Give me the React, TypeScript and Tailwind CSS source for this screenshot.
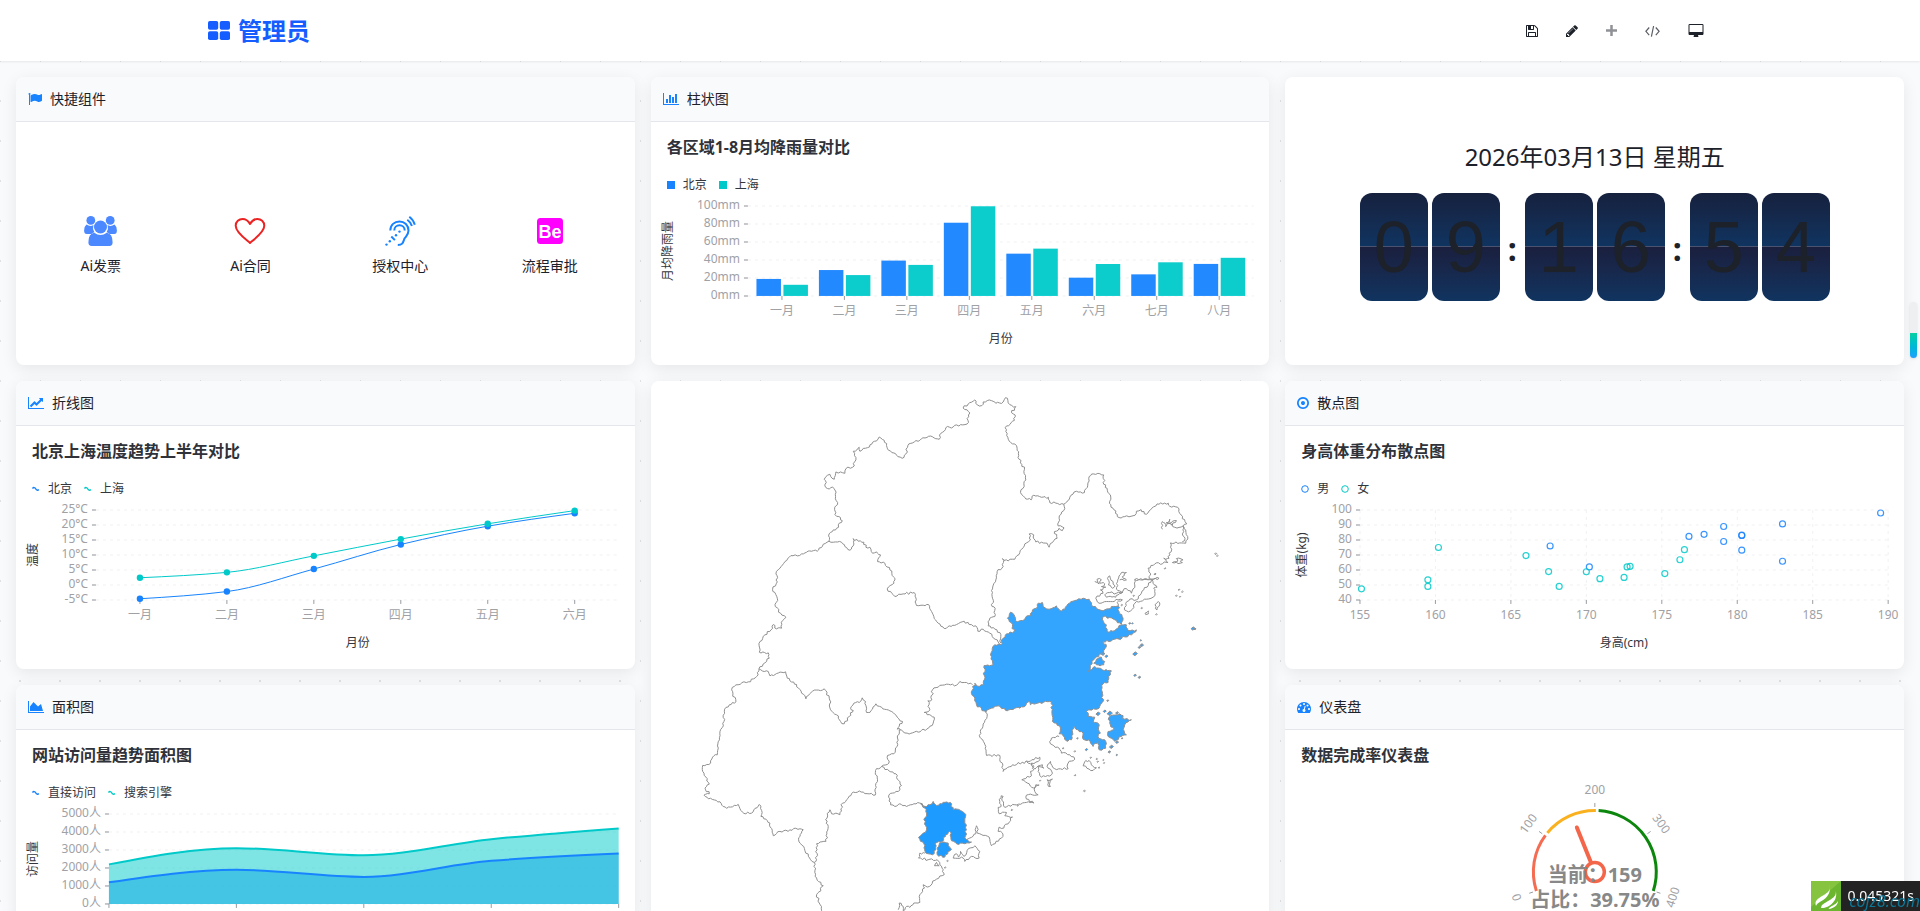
import type { ReactNode } from 'react';

type Point = [number, number];

const BLUE = '#1783FF';
const TEAL = '#00C9C9';

// ---------- icons ----------

interface GlyphProps {
  d: string;
  viewBox?: string;
  className?: string;
}

function Glyph({ d, viewBox = '0 0 1792 1792', className = 'h-3.5 w-3.5' }: GlyphProps) {
  return (
    <svg viewBox={viewBox} className={className} fill="currentColor" aria-hidden="true">
      <path d={d} />
    </svg>
  );
}

const icons = {
  flag: 'M320 256q0 72-64 110v1266q0 13-9.5 22.5t-22.5 9.5h-64q-13 0-22.5-9.5t-9.5-22.5v-1266q-64-38-64-110 0-53 37.5-90.5t90.5-37.5 90.5 37.5 37.5 90.5zm1472 64v763q0 25-12.5 38.5t-39.5 27.5q-215 116-369 116-61 0-123.5-22t-108.5-48-115.5-48-142.5-22q-192 0-464 146-17 9-33 9-26 0-45-19t-19-45v-742q0-32 31-55 21-14 79-43 236-120 421-120 107 0 200 29t219 88q38 19 88 19 54 0 117.5-21t110-47 88-47 54.5-21q26 0 45 19t19 45z',
  bar: 'M640 896v512h-256v-512h256zm384-512v1024h-256v-1024h256zm1024 1152v128h-2048v-1536h128v1408h1920zm-640-896v768h-256v-768h256zm384-384v1152h-256v-1152h256z',
  line: 'M2048 1536v128h-2048v-1536h128v1408h1920zm-128-1248v435q0 21-19.5 29.5t-35.5-7.5l-121-121-633 633q-10 10-23 10t-23-10l-233-233-416 416-192-192 585-585q10-10 23-10t23 10l233 233 464-464-121-121q-16-16-7.5-35.5t29.5-19.5h435q14 0 23 9t9 23z',
  area: 'M2048 1536v128h-2048v-1536h128v1408h1920zm-384-1024l256 896h-1664v-576l448-576 576 576z',
  dot: 'M1152 896q0 106-75 181t-181 75-181-75-75-181 75-181 181-75 181 75 75 181zm-256-544q-148 0-273 73t-198 198-73 273 73 273 198 198 273 73 273-73 198-198 73-273-73-273-198-198-273-73zm768 544q0 209-103 385.5t-279.5 279.5-385.5 103-385.5-103-279.5-279.5-103-385.5 103-385.5 279.5-279.5 385.5-103 385.5 103 279.5 279.5 103 385.5z',
  gauge: 'M384 1152q0-53-37.5-90.5t-90.5-37.5-90.5 37.5-37.5 90.5 37.5 90.5 90.5 37.5 90.5-37.5 37.5-90.5zm192-448q0-53-37.5-90.5t-90.5-37.5-90.5 37.5-37.5 90.5 37.5 90.5 90.5 37.5 90.5-37.5 37.5-90.5zm428 481l101-382q6-26-7.5-48.5t-38.5-29.5-48 6.5-30 39.5l-101 382q-60 5-107 43.5t-63 98.5q-20 77 20 146t117 89 146-20 89-117q16-60-6-117t-72-91zm660-33q0-53-37.5-90.5t-90.5-37.5-90.5 37.5-37.5 90.5 37.5 90.5 90.5 37.5 90.5-37.5 37.5-90.5zm-640-640q0-53-37.5-90.5t-90.5-37.5-90.5 37.5-37.5 90.5 37.5 90.5 90.5 37.5 90.5-37.5 37.5-90.5zm448 192q0-53-37.5-90.5t-90.5-37.5-90.5 37.5-37.5 90.5 37.5 90.5 90.5 37.5 90.5-37.5 37.5-90.5zm320 448q0 261-141 483-19 29-54 29h-1402q-35 0-54-29-141-221-141-483 0-182 71-348t191-286 286-191 348-71 348 71 286 191 191 286 71 348z',
  save: 'M512 1536h768v-384h-768v384zm896 0h128v-896q0-14-10-38.5t-20-34.5l-281-281q-10-10-34-20t-39-10v416q0 40-28 68t-68 28h-576q-40 0-68-28t-28-68v-416h-128v1280h128v-416q0-40 28-68t68-28h832q40 0 68 28t28 68v416zm-384-928v-320q0-13-9.5-22.5t-22.5-9.5h-192q-13 0-22.5 9.5t-9.5 22.5v320q0 13 9.5 22.5t22.5 9.5h192q13 0 22.5-9.5t9.5-22.5zm640 32v928q0 40-28 68t-68 28h-1344q-40 0-68-28t-28-68v-1344q0-40 28-68t68-28h928q40 0 88 20t76 48l280 280q28 28 48 76t20 88z',
  pencil: 'M491 1536l91-91-235-235-91 91v107h128v128h107zm523-928q0-22-22-22-10 0-17 7l-542 542q-7 7-7 17 0 22 22 22 10 0 17-7l542-542q7-7 7-17zm-54-192l416 416-832 832h-416v-416zm683 96q0 53-37 90l-166 166-416-416 166-165q36-38 90-38 53 0 91 38l235 234q37 39 37 91z',
  desktop: 'M1728 992v-832q0-13-9.5-22.5t-22.5-9.5h-1600q-13 0-22.5 9.5t-9.5 22.5v832q0 13 9.5 22.5t22.5 9.5h1600q13 0 22.5-9.5t9.5-22.5zm128-832v1088q0 66-47 113t-113 47h-544q0 37 16 77.5t32 71 16 43.5q0 26-19 45t-45 19h-512q-26 0-45-19t-19-45q0-14 16-44t32-70 16-78h-544q-66 0-113-47t-47-113v-1088q0-66 47-113t113-47h1600q66 0 113 47t47 113z',
};

function GroupIcon() {
  return (
    <svg viewBox="0 0 33 30" className="h-[30px] w-[33px]" fill="#4C88FF" aria-hidden="true">
      <ellipse cx="6.8" cy="4.4" rx="4.4" ry="4.4" />
      <ellipse cx="26.2" cy="4.4" rx="4.4" ry="4.4" />
      <path d="M2.5 8.6q3.8 2.600 6.900.4a8.500 8.500 0 0 0 1 7.200q-2 .6-3 1.800h-4.600Q.1 18 .1 14.500q0-4 2.400-5.900z" />
      <path d="M30.500 8.600q-3.800 2.600-6.900.4a8.500 8.500 0 0 1-1 7.200q2 .6 3 1.800h4.600q2.700 0 2.700-3.500 0-4-2.400-5.900z" />
      <circle cx="16.500" cy="11" r="6.500" />
      <path d="M10.200 16.800q6.300 4.600 12.600 0 5.800.8 5.800 9.400 0 3.800-3.300 3.800H7.700q-3.300 0-3.300-3.800 0-8.600 5.800-9.400z" />
    </svg>
  );
}

function HeartIcon() {
  return (
    <svg viewBox="0 0 32 30" className="h-[30px] w-8" fill="none" stroke="#EB2323" strokeWidth="2" strokeLinejoin="round" aria-hidden="true">
      <path d="M16 27C12.500 23.800 1.700 16.500 1.700 9.800 1.700 5.500 5 3 8.600 3c3.200 0 5.600 1.800 7.400 5 1.800-3.200 4.200-5 7.400-5 3.600 0 6.900 2.500 6.900 6.800C30.300 16.500 19.500 23.800 16 27z" />
    </svg>
  );
}

function ListenIcon() {
  return (
    <svg viewBox="0 0 31 30" className="h-[30px] w-[31px]" fill="none" stroke="#1783FF" strokeWidth="2" aria-hidden="true">
      <path d="M5.300 14.500C5.300 9 9.500 5.400 14.500 5.400S23.500 9.300 23.500 14.500c0 3.600-1.800 5-3.400 7.200-2.300 3-.8 7.200-7.300 7.200" />
      <path d="M9.300 14.500c0-3 2.300-5.200 5.200-5.200s5.200 2.200 5.200 5.200" />
      <path d="M6.300 20.500l3.600 3.600M22.300 3.800c2 1.400 3.700 3.500 4.600 6.200M24.300.8c2.600 1.900 4.500 4.600 5.500 8" />
      <g fill="#1783FF" stroke="none">
        <circle cx="1.500" cy="28.600" r="1.200" />
        <circle cx="4.800" cy="25.300" r="1.200" />
        <circle cx="11" cy="19.200" r="1.200" />
        <circle cx="14.500" cy="15.600" r="1.200" />
      </g>
    </svg>
  );
}

function BeIcon() {
  return (
    <svg viewBox="0 0 26 26" className="my-0.5 h-[26px] w-[26px]" aria-hidden="true">
      <rect width="26" height="26" rx="3.500" fill="#FF00FF" />
      <text x="13" y="20" textAnchor="middle" fill="#fff" fontSize="18" fontWeight="700" fontFamily="Liberation Sans, sans-serif">Be</text>
    </svg>
  );
}

// ---------- layout pieces ----------

interface CardProps {
  title?: string;
  icon?: ReactNode;
  className?: string;
  children: ReactNode;
}

function Card({ title, icon, className = '', children }: CardProps) {
  return (
    <section className={`flex flex-col overflow-hidden rounded-lg bg-white shadow-[0_4px_16px_rgba(0,0,0,0.08)] ${className}`}>
      {title && (
        <header className="flex h-[45px] shrink-0 items-center gap-2 border-b border-[#e5e6eb] bg-[#f9fafc] px-3 text-[#1783ff]">
          {icon}
          <h2 className="text-sm text-[#1d2129]">{title}</h2>
        </header>
      )}
      {children}
    </section>
  );
}

type Marker = 'square' | 'wave' | 'ring';

function LegendMark({ kind, color }: { kind: Marker; color: string }) {
  return (
    <svg viewBox="0 0 8 8" className="h-2 w-2" aria-hidden="true">
      {kind === 'square' && <rect width="8" height="8" fill={color} />}
      {kind === 'wave' && <path d="M.5 3.500C1.500 2 3 2.500 3.800 4S6 5.500 6.800 4.500" fill="none" stroke={color} strokeWidth="1.500" />}
      {kind === 'ring' && <circle cx="4" cy="4" r="3.300" fill="none" stroke={color} />}
    </svg>
  );
}

interface ChartProps {
  title: string;
  names?: [string, string];
  marker?: Marker;
  children: ReactNode;
}

function Chart({ title, names, marker = 'square', children }: ChartProps) {
  return (
    <div className="pt-[13px]">
      <h3 className="px-4 text-base leading-6 font-bold text-[#2f3238]">{title}</h3>
      {names && (
        <ul className="mt-4 mb-px flex gap-3 px-4 text-xs leading-5 text-[#33363c]">
          {names.map((name, i) => (
            <li key={name} className="flex items-center gap-2">
              <LegendMark kind={marker} color={i === 0 ? BLUE : TEAL} />
              {name}
            </li>
          ))}
        </ul>
      )}
      {children}
    </div>
  );
}

function Plot({ label, children }: { label: string; children: ReactNode }) {
  return (
    <svg viewBox="0 0 619 168" className="block w-full" fontSize="12" role="img" aria-label={label}>
      {children}
    </svg>
  );
}

interface AxisProps {
  labels: string[];
  x: number;
  right: number;
  step: number;
  title: string;
}

// horizontal grid, tick marks and labels, listed from top to bottom
function YAxis({ labels, x, right, step, title }: AxisProps) {
  return (
    <g>
      {labels.map((text, i) => {
        const y = 10 + i * step;
        return (
          <g key={text}>
            <line x1={x} x2={right} y1={y} y2={y} stroke="#f1f1f3" strokeDasharray="3 4" />
            <line x1={x - 4} x2={x} y1={y} y2={y} stroke="#b4b6ba" strokeWidth="1.500" />
            <text x={x - 8} y={y + 3} textAnchor="end" fill="#a0a1a5">{text}</text>
          </g>
        );
      })}
      <text transform="translate(21 55) rotate(-90)" textAnchor="middle" fill="#33363c">{title}</text>
    </g>
  );
}

function XAxis({ labels, x, step, title, center }: { labels: string[]; x: number; step: number; title: string; center: number }) {
  return (
    <g>
      {labels.map((text, i) => (
        <g key={text}>
          <line x1={x + i * step} x2={x + i * step} y1="100" y2="104" stroke="#9a9ca1" />
          <text x={x + i * step} y="119" textAnchor="middle" fill="#a0a1a5">{text}</text>
        </g>
      ))}
      <text x={center} y="147" textAnchor="middle" fill="#33363c">{title}</text>
    </g>
  );
}

// smooth path with horizontal-monotone tangents
function smooth(pts: Point[]): string {
  const n = pts.length;
  const slope = pts.slice(1).map((p, i) => (p[1] - pts[i][1]) / (p[0] - pts[i][0]));
  const m = pts.map((_, i) => {
    if (i === 0) return slope[0];
    if (i === n - 1) return slope[n - 2];
    const a = slope[i - 1];
    const b = slope[i];
    return a * b <= 0 ? 0 : (2 * a * b) / (a + b);
  });
  m[0] = (3 * slope[0] - m[1]) / 2;
  m[n - 1] = (3 * slope[n - 2] - m[n - 2]) / 2;
  let d = `M${pts[0][0]} ${pts[0][1]}`;
  for (let i = 1; i < n; i++) {
    const h = (pts[i][0] - pts[i - 1][0]) / 3;
    d += `C${pts[i - 1][0] + h} ${pts[i - 1][1] + m[i - 1] * h} ${pts[i][0] - h} ${pts[i][1] - m[i] * h} ${pts[i][0]} ${pts[i][1]}`;
  }
  return d;
}

// ---------- charts ----------

const months = ['一月', '二月', '三月', '四月', '五月', '六月', '七月', '八月'];

const rain = [
  [18.9, 12.4],
  [28.8, 23.2],
  [39.3, 34.5],
  [81.4, 99.7],
  [47, 52.6],
  [20.3, 35.5],
  [24, 37.4],
  [35.6, 42.4],
];

function RainChart() {
  return (
    <Plot label="各区域1-8月均降雨量对比">
      <YAxis labels={['100mm', '80mm', '60mm', '40mm', '20mm', '0mm']} x={97} right={603} step={18} title="月均降雨量" />
      {rain.map((pair, i) =>
        pair.map((v, s) => (
          <rect
            key={`${i}-${s}`}
            x={105.5 + i * 62.5 + s * 27}
            y={100 - v * 0.9}
            width="24.500"
            height={v * 0.9}
            fill={s === 0 ? BLUE : TEAL}
            opacity="0.95"
          />
        )),
      )}
      <XAxis labels={months} x={131} step={62.5} title="月份" center={350} />
    </Plot>
  );
}

const temps = [
  { color: BLUE, values: [-4.6, -2.2, 5.3, 13.5, 19.6, 23.9] },
  { color: TEAL, values: [2.4, 4.2, 9.7, 15.3, 20.4, 24.8] },
];

function TempChart() {
  return (
    <Plot label="北京上海温度趋势上半年对比">
      <YAxis labels={['25°C', '20°C', '15°C', '10°C', '5°C', '0°C', '-5°C']} x={80} right={602} step={15} title="温度" />
      <XAxis labels={months.slice(0, 6)} x={124} step={87} title="月份" center={342} />
      {temps.map(({ color, values }) => {
        const pts = values.map((v, i): Point => [124 + i * 87, 10 + (25 - v) * 3]);
        return (
          <g key={color}>
            <path d={smooth(pts)} fill="none" stroke={color} />
            {pts.map(([x, y]) => (
              <circle key={x} cx={x} cy={y} r="3.200" fill={color} />
            ))}
          </g>
        );
      })}
    </Plot>
  );
}

const visits = [
  { color: BLUE, values: [1200, 1900, 1500, 2400, 2800] },
  { color: TEAL, values: [2200, 3100, 2700, 3600, 4200] },
];

function VisitChart() {
  const series = visits.map(({ color, values }) => ({
    color,
    d: smooth(values.map((v, i): Point => [93 + i * 127.5, 100 - v * 0.018])),
  }));
  return (
    <Plot label="网站访问量趋势面积图">
      <YAxis labels={['5000人', '4000人', '3000人', '2000人', '1000人', '0人']} x={93} right={603} step={18} title="访问量" />
      {series.map(({ color, d }) => (
        <path key={color} d={`${d}V100H93Z`} fill={color} opacity="0.5" />
      ))}
      {series.map(({ color, d }) => (
        <path key={color} d={d} fill="none" stroke={color} strokeWidth="2" />
      ))}
      {[0, 1, 2, 3, 4].map(i => (
        <line key={i} x1={93 + i * 127.5} x2={93 + i * 127.5} y1="100" y2="104" stroke="#9a9ca1" />
      ))}
    </Plot>
  );
}

const men: Point[] = [
  [167.6, 76], [170.2, 62], [176.8, 82.4], [177.8, 83.8], [179.1, 89], [179.1, 79], [180.3, 83.2],
  [180.3, 83], [180.3, 73.2], [183, 90.7], [183, 65.8], [189.5, 98],
];

const women: Point[] = [
  [155.1, 47.4], [159.5, 53.4], [159.5, 49], [160.2, 75], [166, 69.6], [167.5, 58.9], [168.2, 49], [170, 58.8],
  [170.9, 54.2], [172.5, 55], [172.7, 62], [172.9, 62.4], [175.2, 57.6], [176.2, 66.8], [176.5, 73.5],
];

function BodyChart() {
  return (
    <Plot label="身高体重分布散点图">
      {[0, 1, 2, 3, 4, 5, 6, 7].map(i => (
        <line key={i} x1={75 + i * 75.5} x2={75 + i * 75.5} y1="10" y2="100" stroke="#f1f1f3" strokeDasharray="3 4" />
      ))}
      <YAxis labels={['100', '90', '80', '70', '60', '50', '40']} x={75} right={603} step={15} title="体重(kg)" />
      <XAxis labels={['155', '160', '165', '170', '175', '180', '185', '190']} x={75} step={75.5} title="身高(cm)" center={339} />
      {[men, women].map((group, g) =>
        group.map(([h, w], i) => (
          <circle
            key={`${g}-${i}`}
            cx={75 + (h - 155) * 15.1}
            cy={100 - (w - 40) * 1.5}
            r="3"
            fill="none"
            stroke={g === 0 ? BLUE : TEAL}
            strokeOpacity="0.85"
            strokeWidth="1.200"
          />
        )),
      )}
    </Plot>
  );
}

function polar(angle: number, r: number): Point {
  const a = (angle * Math.PI) / 180;
  return [310 + Math.cos(a) * r, 105 - Math.sin(a) * r];
}

function arc(from: number, to: number): string {
  const [x1, y1] = polar(from, 61.5);
  const [x2, y2] = polar(to, 61.5);
  return `M${x1} ${y1}A61.5 61.5 0 0 1 ${x2} ${y2}`;
}

const gaugeMarks = [
  { text: '0', angle: 198, rotate: -108 },
  { text: '100', angle: 144, rotate: -54 },
  { text: '200', angle: 90, rotate: 0 },
  { text: '300', angle: 36, rotate: 54 },
  { text: '400', angle: -18, rotate: -72 },
];

function GaugeChart() {
  const [nx, ny] = polar(112, 48);
  const [bx, by] = polar(112, 10);
  return (
    <svg viewBox="0 0 619 206" className="block w-full" fontSize="12" role="img" aria-label="数据完成率仪表盘">
      <g fill="none" strokeWidth="3" opacity="0.95">
        <path d={arc(198, 143.5)} stroke="#F4664A" />
        <path d={arc(140.5, 89)} stroke="#FAAD14" />
        <path d={arc(86.5, -18)} stroke="#008000" />
      </g>
      {gaugeMarks.map(({ text, angle, rotate }) => {
        const [x1, y1] = polar(angle, 65);
        const [x2, y2] = polar(angle, 69);
        const [tx, ty] = polar(angle, 82);
        return (
          <g key={text}>
            <line x1={x1} y1={y1} x2={x2} y2={y2} stroke="#9a9ca1" />
            <text transform={`translate(${tx} ${ty}) rotate(${rotate})`} y="4" textAnchor="middle" fill="#a0a1a5">{text}</text>
          </g>
        );
      })}
      <line x1={bx} y1={by} x2={nx} y2={ny} stroke="#F4664A" strokeWidth="4" strokeLinecap="round" />
      <circle cx="310" cy="105" r="9.500" fill="none" stroke="#F4664A" strokeWidth="3.500" />
      <g fontSize="20" fontWeight="700" fill="#888" textAnchor="middle">
        <text x="310" y="115">当前：159</text>
        <text x="310" y="140">占比：39.75%</text>
      </g>
    </svg>
  );
}

// ---------- map ----------

interface Shape {
  at?: Point;
  fill?: string;
  pts: string;
}

const borders: Shape[] = [
  // north
  { pts: '417,484 416,468 430,450 440,445 457,422 447,410 435,404 434,388 443,374 437,350 435,330 428,321 418,327 408,323 409,308 403,298 408,290 420,283 433,298 438,276 452,276 465,280 468,266 488,262 494,246 498,240 494,220 490,214 508,202 510,214 533,203 548,187 560,183 568,171 583,181 590,197 596,211 612,219 624,230 637,235 648,222 653,202 663,190 690,181 716,169 733,174 748,178 753,160 768,143 790,141 812,134 832,132 836,105 840,99 820,84 835,72 855,60 862,74 876,77 880,66 905,62 918,70 940,66 947,53 953,55 960,74 978,80 965,98 976,105 974,121 950,138 948,155 958,183 975,192 982,205 988,238 1004,268 1008,300 1000,325 992,337 1008,357 1024,360 1032,346 1055,352 1076,352 1080,368 1122,373' },
  // north-east coast
  { at: [810, 0], pts: '312,373 330,352 350,334 374,338 383,322 388,290 402,282 432,285 432,313 442,325 452,345 449,370 463,390 478,413 495,410 526,406 530,394 544,389 560,403 576,385 592,372 626,370 630,379 654,382 664,405 676,425 681,432 670,440 678,450 684,470 678,490 660,489 632,489 636,508 628,520 628,535 612,535 625,548 585,552 565,565 572,580 570,596 525,599 525,615 515,640 500,626 485,636 470,628 474,600 485,578 500,578 488,590 500,600 480,600' },
  { at: [810, 0], pts: '608,448 608,425 616,430 618,440 630,418 633,430 650,422 638,436 620,428 645,442 670,438 672,455 668,462 676,476 668,485' },
  { at: [810, 0], pts: '638,548 652,546 650,536 664,537 670,540 662,545 668,548 655,551 638,548' },
  { at: [810, 0], pts: '525,599 598,595 575,600 545,640 530,660 510,658 498,670 494,690 506,696 518,688 530,665 560,658 580,652 586,640 582,625 592,622 580,610 572,596' },
  { at: [810, 0], pts: '405,605 418,612 412,598 425,600 420,610 435,612 425,620 438,622 422,630 430,640 408,655 418,670 440,665 475,660 488,660 472,668 476,678' },
  { at: [810, 0], pts: '446,590 446,615 458,625 466,618 460,605 450,588 446,590' },
  { at: [810, 0], pts: '435,645 450,638 470,640 490,636 475,645 468,652 440,652 435,645' },
  { at: [810, 0], pts: '586,675 596,665 600,675 592,690 586,675' },
  { at: [810, 0], pts: '556,700 566,693 566,702 558,704 556,700' },
  // inner provinces
  { at: [810, 0], pts: '312,373 312,392 298,415 295,438 313,444 308,452 298,445 284,455 292,475 278,488 268,502 262,490 228,486 222,465 208,462 212,480 195,492 180,518 165,538 145,543 128,536 130,560 112,575 108,600 95,632 98,655 97,680 106,685 105,710 90,715 85,738 105,748 120,758 123,790' },
  { pts: '417,484 430,487 455,487 465,500 480,511 490,498 490,476 505,484 522,487 528,502 540,502 548,520 560,516 572,525 563,545 585,550 600,570 615,595 612,610 592,627 615,650 640,642 673,638 680,677 700,676 716,674 722,690 732,710 745,730 763,746 778,738 800,734 823,724 838,734 858,738 864,754 880,748 900,760 933,795' },
  { pts: '417,484 400,493 382,514 365,514 350,517 335,522 322,528 303,527 285,545 270,565 258,582 262,606 248,628 262,655 256,680 272,700 288,712 278,722 275,745 260,747 250,734 243,750 225,765 210,785 208,817 235,819 238,835 207,867' },
  { at: [0, 780], pts: '207,87 200,110 175,126 138,135 125,150 138,186 118,195 104,208 102,245 90,275 85,325 82,345 68,352 62,370 38,377 42,400 48,412 58,433 45,445 58,462 42,466 55,477 90,486 110,506 145,494 162,521 185,520 208,494 215,512 213,530 240,550 250,588 270,575 330,567 340,570 326,600 345,633 355,643 362,660 373,668' },
  { at: [0, 780], pts: '207,87 235,95 240,108 260,101 287,96 292,115 320,134 335,160 348,177 368,154 403,147 418,175 422,210 440,225 452,245 463,252 478,230 490,212 482,205 492,190 508,188 517,174 527,185 530,218 540,218 558,192 575,202 600,213 622,232 638,245 622,268 632,270' },
  { at: [0, 780], pts: '628,270 652,280 685,277 716,265 730,250 733,232 703,218 720,210 714,183 726,180 728,150 745,142 770,133 800,136 810,125 830,128 848,135' },
  { at: [0, 780], pts: '628,270 622,320 612,342 593,347 597,370 575,380 557,392 563,420 556,466 520,457 490,457 470,480 458,490 450,525 425,522 420,510 407,540 415,560 408,605 380,612 380,660 373,668 380,715 400,738 380,765 388,790 395,813 392,840' },
  { at: [0, 780], pts: '575,380 598,394 618,402 622,418 635,437 625,455 597,466 602,495 615,500 630,492 650,500 690,490 705,500' },
  // south coast
  { at: [0, 780], pts: '625,810 628,790 640,800 640,813 650,800 660,803 672,790 690,788 690,765 704,745 700,735 712,742 735,722 763,705 760,690 750,675 742,660 715,660 686,655 690,640 705,640' },
  { at: [0, 780], pts: '734,678 740,668 748,678 734,678' },
  { at: [0, 780], pts: '790,655 800,642 806,652 812,635 822,650 832,632 855,618 870,635 868,655 845,650 825,665 815,652 804,656 790,655' },
  { at: [810, 780], pts: '20,600 48,582 46,570 50,558 55,570 52,580 88,592 95,618 125,595 128,580 115,575 118,562 132,565 158,532 135,528 140,518 118,522 115,503 124,500 120,485 124,468 130,470 126,482 135,503 165,495 200,488 222,490 200,478 200,466 235,465 225,455 228,435 238,436 222,445 186,420 215,408 212,395 222,390 218,375 200,365' },
  { at: [810, 780], pts: '78,217 82,230 62,270 60,292 78,320 80,347 120,347 130,395 158,375 205,365 240,352 235,365 215,370 225,388 248,375 252,385 235,380 235,395 245,412 275,405 278,400 262,380 272,365 285,387 325,387 325,370 345,358 330,345 305,340 298,325 272,312 275,295 298,290' },
  { at: [810, 780], pts: '262,420 278,418 270,430 272,440 264,435 262,420' },
  { at: [810, 780], pts: '378,362 370,378 388,388 400,392 410,384 395,375 388,362 378,362' },
];

const regions: Shape[] = [
  { at: [810, 0], fill: '#33A5FF', pts: '123,795 130,775 140,762 163,755 158,740 143,715 152,697 165,710 172,726 188,722 200,709 212,708 218,690 230,685 235,670 248,668 250,680 268,688 290,678 300,692 315,688 325,672 345,662 370,655 388,658 400,680 430,693 448,687 455,680 475,678 478,695 490,715 485,733 470,722 450,713 430,710 428,718 440,735 442,755 465,752 485,735 500,735 505,752 530,750 515,765 485,775 465,778 430,786 440,800 432,812 425,822 402,840 385,875 405,860 428,870 455,873 445,908 430,912 425,930 430,965 418,985 380,995 385,1010 405,1012 400,1025 415,1030 422,1060 415,1070 438,1085 438,1105 418,1110 415,1085 400,1100 388,1080 370,1078 370,1060 355,1050 342,1040 335,1080 318,1082 310,1068 298,1062 302,1045 290,1030 278,1025 275,965 240,968 212,975 210,965 195,980 180,985 165,985 142,993 118,978 95,985 78,997 50,975 45,955 35,942 45,910 58,920 72,915 73,857 100,855 92,825 105,795 123,795' },
  { at: [810, 780], fill: '#33A5FF', pts: '402,70 410,58 425,52 435,65 432,75 410,75 402,70' },
  { at: [810, 780], fill: '#33A5FF', pts: '448,232 480,222 495,238 515,240 495,255 490,268 500,285 485,290 465,305 445,290 445,275 462,270 450,250 448,232' },
  { at: [0, 780], fill: '#1E9BFF', pts: '692,492 705,500 720,495 730,485 740,497 760,488 782,488 790,510 812,512 828,525 825,550 830,570 825,595 845,607 825,612 800,612 785,603 780,575 768,585 758,605 735,612 738,630 728,645 708,640 705,618 686,593 700,580 710,570 702,540 710,520 705,505 692,492' },
  { at: [0, 780], fill: '#1E9BFF', pts: '742,625 755,608 775,610 785,628 765,652 742,645 742,625' },
];

// islets: x, y, width, filled
const islets: [number, number, number, boolean][] = [
  [1578, 522, 6, false], [1583, 528, 5, false], [1426, 566, 5, false], [1396, 583, 6, false], [1468, 630, 5, false],
  [1460, 648, 5, false], [1478, 636, 5, false], [1471, 651, 4, false], [1356, 685, 5, false], [1400, 704, 5, false],
  [1332, 648, 5, false], [1296, 676, 5, false], [1320, 731, 6, true], [1328, 731, 5, true], [1292, 776, 9, true],
  [1353, 782, 5, true], [1510, 747, 12, true], [1516, 748, 6, true], [1356, 797, 11, true], [1349, 803, 8, true],
  [1336, 823, 14, true], [1240, 823, 11, true], [1250, 830, 9, true], [1336, 887, 8, true], [1349, 893, 8, true],
  [1254, 963, 6, true], [1225, 1003, 13, true], [1245, 995, 9, true], [1260, 1002, 16, true], [1282, 1000, 9, true],
  [1265, 1102, 12, true], [1259, 1117, 8, true], [1282, 1088, 9, true], [1297, 1076, 5, true], [1281, 1126, 5, true],
  [1190, 1110, 8, true], [1163, 1076, 5, true], [1120, 1106, 5, false], [1155, 1115, 5, false], [1203, 1134, 5, false],
  [1221, 1138, 5, false], [1224, 1146, 5, false], [1241, 1141, 4, false], [1243, 1150, 4, false], [1228, 1164, 5, false],
  [1156, 1187, 5, false], [1184, 1234, 6, false], [1051, 1203, 4, false], [966, 1291, 5, false], [984, 1278, 4, false],
  [773, 1444, 5, false], [766, 1464, 5, false],
];

// adds small irregular vertices between the given ones so that borders look ragged
function ragged({ at = [0, 0], pts }: Shape): string {
  const list = pts.split(' ').map(p => p.split(',').map(Number));
  const noise = (x: number, y: number) => {
    const s = Math.sin(x * 12.9898 + y * 78.233) * 43758.5453;
    return s - Math.floor(s) - 0.5;
  };
  let d = '';
  list.forEach(([x, y], i) => {
    const ax = x + at[0];
    const ay = y + at[1];
    if (i === 0) {
      d = `M${ax} ${ay}`;
      return;
    }
    const px = list[i - 1][0] + at[0];
    const py = list[i - 1][1] + at[1];
    const len = Math.hypot(ax - px, ay - py);
    const n = Math.max(1, Math.round(len / 6));
    for (let k = 1; k < n; k++) {
      const cx = px + ((ax - px) * k) / n;
      const cy = py + ((ay - py) * k) / n;
      const off = noise(cx, cy) * 7;
      d += `L${(cx - ((ay - py) / len) * off).toFixed(1)} ${(cy + ((ax - px) / len) * off).toFixed(1)}`;
    }
    d += `L${ax} ${ay}`;
  });
  return d;
}

function RegionMap() {
  return (
    <svg viewBox="651 381 619 592" className="block w-full" role="img" aria-label="区域地图">
      <g transform="translate(690 380) scale(0.333333)" stroke="#8f8f8f" strokeWidth="3" strokeLinejoin="round">
        {borders.map(shape => (
          <path key={shape.pts} d={ragged(shape)} fill="none" />
        ))}
        {regions.map(shape => (
          <path key={shape.pts} d={ragged(shape)} fill={shape.fill} />
        ))}
        {islets.map(([x, y, w, filled]) => (
          <path key={`${x}-${y}`} d={`M${x - w / 2} ${y}l${w / 2} ${-w / 2}l${w / 2} ${w / 3}l${-w / 2} ${w / 2}z`} fill={filled ? '#33A5FF' : '#fff'} />
        ))}
      </g>
    </svg>
  );
}

// ---------- clock ----------

function Digit({ value }: { value: string }) {
  return (
    <span className="relative flex h-[108px] w-[68px] flex-col overflow-hidden rounded-xl">
      <span className="h-[54px] border-b border-[#4b5270] bg-linear-to-b from-[#16213e] to-[#0f3460]" />
      <span className="h-[54px] bg-linear-to-b from-[#1a1f3e] to-[#0f3460]" />
      <span className="absolute inset-0 flex items-center justify-center font-['Liberation_Sans',sans-serif] text-7xl leading-none text-[#1d2129]">
        {value}
      </span>
    </span>
  );
}

function Clock() {
  return (
    <div className="flex flex-1 flex-col items-center justify-center gap-5 text-[#1d2129]">
      <p className="text-2xl leading-8">2026年03月13日 星期五</p>
      <div className="flex items-center">
        {['09', '16', '54'].map((pair, i) => (
          <div key={pair} className="flex items-center">
            {i > 0 && <span className="w-[25px] pt-1 text-center text-[32px] leading-none font-bold">:</span>}
            <div className="flex gap-1">
              <Digit value={pair[0]} />
              <Digit value={pair[1]} />
            </div>
          </div>
        ))}
      </div>
    </div>
  );
}

// ---------- page ----------

const shortcuts = [
  { name: 'Ai发票', icon: <GroupIcon /> },
  { name: 'Ai合同', icon: <HeartIcon /> },
  { name: '授权中心', icon: <ListenIcon /> },
  { name: '流程审批', icon: <BeIcon /> },
];

const tools = [
  { name: '保存', icon: <Glyph d={icons.save} viewBox="128 0 1536 1792" className="h-3.5 w-3" /> },
  { name: '编辑', icon: <Glyph d={icons.pencil} viewBox="128 0 1536 1792" className="h-3.5 w-3" /> },
  {
    name: '添加',
    icon: (
      <svg viewBox="0 0 11 14" className="h-3.5 w-[11px]" fill="none" stroke="#8f9196" strokeWidth="2.500" aria-hidden="true">
        <path d="M5.500 1v11M0 6.500h11" />
      </svg>
    ),
  },
  {
    name: '代码',
    icon: (
      <svg viewBox="0 0 15 14" className="h-3.5 w-[15px]" fill="none" stroke="#5a5d64" strokeWidth="1.200" aria-hidden="true">
        <path d="M4.200 3.500.9 7.300l3.300 3.800M10.800 3.500l3.300 3.800-3.300 3.800M8.600 2 6.400 12.600" />
      </svg>
    ),
  },
  { name: '大屏', icon: <Glyph d={icons.desktop} viewBox="-64 0 1920 1792" className="h-3.5 w-4" /> },
];

export default function App() {
  return (
    <div className="h-screen overflow-y-auto bg-[#f9fafc] bg-[radial-gradient(circle_at_0_1px,#dfe1e5_1px,transparent_1.5px),radial-gradient(circle_at_20px_21px,#dfe1e5_1px,transparent_1.5px)] bg-[length:40px_40px] bg-[position:0_60px] font-['Noto_Sans','Noto_Sans_CJK_SC',sans-serif] text-[#1d2129] [scrollbar-width:none]">
      <header className="h-[61px] bg-white shadow-[0_1px_2px_rgba(0,0,0,0.08)]">
        <div className="mx-auto flex h-full max-w-[1536px] items-center justify-between px-4">
          <h1 className="flex items-center gap-2 text-2xl font-bold text-[#165dff]">
            <svg viewBox="0 0 22 19" className="h-[19px] w-[22px]" fill="currentColor" aria-hidden="true">
              <rect width="10.200" height="8.800" rx="1.800" />
              <rect x="11.800" width="10.200" height="8.800" rx="1.800" />
              <rect y="10.200" width="10.200" height="8.800" rx="1.800" />
              <rect x="11.800" y="10.200" width="10.200" height="8.800" rx="1.800" />
            </svg>
            管理员
          </h1>
          <nav className="flex gap-3">
            {tools.map(tool => (
              <button key={tool.name} type="button" aria-label={tool.name} className="rounded p-2 hover:bg-gray-100">
                {tool.icon}
              </button>
            ))}
          </nav>
        </div>
      </header>

      <main className="grid auto-rows-[288px] grid-cols-3 gap-4 p-4">
        <Card title="快捷组件" icon={<Glyph d={icons.flag} />}>
          <div className="grid flex-1 grid-cols-4 items-center px-2.5 pt-1">
            {shortcuts.map(item => (
              <a key={item.name} href="#" className="flex flex-col items-center gap-2.5 text-sm leading-5">
                {item.icon}
                {item.name}
              </a>
            ))}
          </div>
        </Card>

        <Card title="柱状图" icon={<Glyph d={icons.bar} viewBox="0 0 2048 1792" className="h-3.5 w-4" />}>
          <Chart title="各区域1-8月均降雨量对比" names={['北京', '上海']}>
            <RainChart />
          </Chart>
        </Card>

        <Card>
          <Clock />
        </Card>

        <Card title="折线图" icon={<Glyph d={icons.line} viewBox="0 0 2048 1792" className="h-3.5 w-4" />}>
          <Chart title="北京上海温度趋势上半年对比" names={['北京', '上海']} marker="wave">
            <TempChart />
          </Chart>
        </Card>

        <Card className="row-span-2">
          <RegionMap />
        </Card>

        <Card title="散点图" icon={<Glyph d={icons.dot} viewBox="128 0 1536 1792" className="h-3.5 w-3" />}>
          <Chart title="身高体重分布散点图" names={['男', '女']} marker="ring">
            <BodyChart />
          </Chart>
        </Card>

        <Card title="面积图" icon={<Glyph d={icons.area} viewBox="0 0 2048 1792" className="h-3.5 w-4" />}>
          <Chart title="网站访问量趋势面积图" names={['直接访问', '搜索引擎']} marker="wave">
            <VisitChart />
          </Chart>
        </Card>

        <Card title="仪表盘" icon={<Glyph d={icons.gauge} />}>
          <Chart title="数据完成率仪表盘">
            <GaugeChart />
          </Chart>
        </Card>
      </main>

      {/* scroll progress */}
      <div className="fixed top-[302px] right-[3px] flex h-14 w-[7px] flex-col justify-end overflow-hidden rounded bg-[#eeeff1] shadow-sm">
        <div className="h-[25px] bg-linear-to-b from-[#0bd0a0] to-[#1e9fff]" />
      </div>

      {/* trace badge */}
      <div className="fixed right-0 bottom-0 flex h-[30px] items-center bg-[#232323] text-sm text-white">
        <svg viewBox="0 0 30 30" className="h-[30px] w-[30px]" aria-hidden="true">
          <rect width="30" height="30" fill="#6CB52F" />
          <path d="M0 0h30L0 26z" fill="#86C440" />
          <g fill="#fff">
            <path d="M18 4c2.500 5-1 7.500-6 10.500S3 20 5 25c1.500-3.500 5-4.500 8.500-7S20.500 9.500 18 4z" />
            <path d="M24.500 9c1.500 5-1.500 7.500-6.500 10.500S10.500 23 10 27c8 .5 18-7.500 14.500-18z" />
            <path d="M27 20c0 4-4 7.500-9.500 8 2-3.500 7-3.500 9.500-8z" />
          </g>
        </svg>
        <span className="px-1.5">0.045321s</span>
        <span className="absolute right-0 bottom-0 text-base leading-5 text-[#0c7696] italic">cojz8.com</span>
      </div>
    </div>
  );
}
